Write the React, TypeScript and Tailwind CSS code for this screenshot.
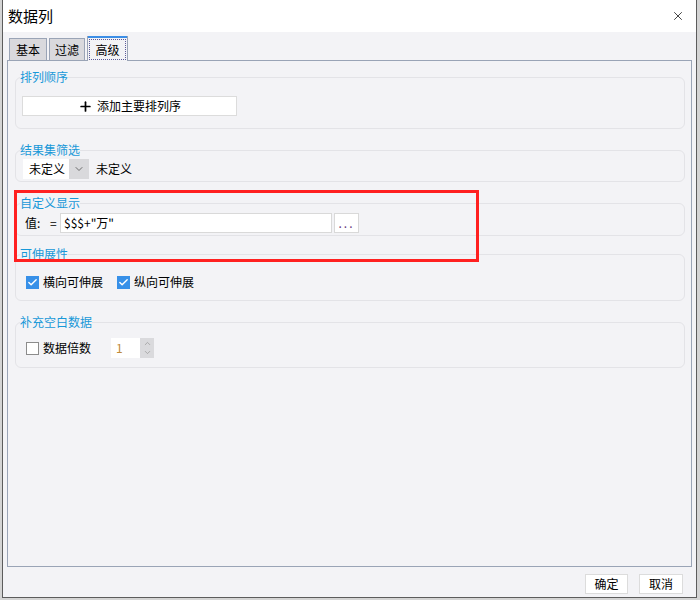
import { Check, Plus, X, ChevronDown, ChevronUp } from "lucide-react";

const font = { fontFamily: '"Noto Sans CJK SC", "Liberation Sans", sans-serif' };

function Group({ title, children, className = "" }: { title: string; children: React.ReactNode; className?: string }) {
  return (
    <fieldset className={`rounded-[6px] border border-[#e3e3e7] pl-[4px] ${className}`}>
      <legend className="px-0 text-[12px] leading-4 text-[#1898d8]">{title}</legend>
      {children}
    </fieldset>
  );
}

function CheckBox({ checked, label }: { checked: boolean; label: string }) {
  return (
    <label className="flex items-center gap-[4px]">
      {checked ? (
        <span className="flex h-[13px] w-[13px] items-center justify-center bg-[#3790e8]">
          <Check className="h-[11px] w-[11px] text-white" strokeWidth={3} />
        </span>
      ) : (
        <span className="h-[13px] w-[13px] border border-[#8c8c8c] bg-white" />
      )}
      <span>{label}</span>
    </label>
  );
}

export default function App() {
  return (
    <div className="h-[600px] w-[700px] overflow-hidden bg-[#d4d4d4] text-[12px] text-black" style={font}>
      <div className="ml-[2px] flex h-[598px] w-[695px] flex-col border-x border-b border-[#5c5c5c] bg-[#f3f3f6]">
        <div className="flex h-[32px] items-center justify-between bg-white pl-[5px] pr-[11px]">
          <span className="text-[15px]">数据列</span>
          <X className="h-[14px] w-[14px] text-black" strokeWidth={1.25} />
        </div>

        <div className="px-[4px] pt-[4px]">
          <div className="flex h-[24px] items-end gap-[2px] pl-[2px]">
            <div className="flex h-[22px] w-[38px] items-center justify-center border border-b-0 border-[#9aa4b6] bg-[#d9d9dd]">基本</div>
            <div className="flex h-[22px] w-[36px] items-center justify-center border border-b-0 border-[#9aa4b6] bg-[#d9d9dd]">过滤</div>
            <div className="relative z-10 -mb-px flex h-[25px] w-[41px] flex-col border-x border-[#9aa4b6] bg-[#f3f3f6]">
              <div className="h-[2px] bg-[#3c8ee6]" />
              <div className="m-[1px] flex flex-1 items-center justify-center border border-dotted border-[#5b5b9a]">高级</div>
            </div>
          </div>

          <div className="flex h-[507px] flex-col border border-[#9aa4b6] bg-[#f3f3f6] pl-[7px] pr-[6px] pt-[8px]">
            <Group title="排列顺序" className="pb-[12px]">
              <div className="ml-[2px] mt-[11px] flex h-[20px] w-[215px] items-center justify-center gap-[4px] border border-[#dcdcdc] bg-white">
                <Plus className="h-[15px] w-[15px]" strokeWidth={2.75} />
                <span>添加主要排列序</span>
              </div>
            </Group>

            <Group title="结果集筛选" className="mt-[13px] pb-[2px]">
              <div className="ml-[3px] mt-[1px] flex items-center gap-[7px]">
                <div className="flex h-[20px] w-[66px]">
                  <div className="flex flex-1 items-center bg-white pl-[6px]">未定义</div>
                  <div className="flex w-[20px] items-center justify-center bg-[#d9d9dc]">
                    <ChevronDown className="h-[12px] w-[12px] text-[#444]" strokeWidth={1.5} />
                  </div>
                </div>
                <span>未定义</span>
              </div>
            </Group>

            <div className="relative">
              <div className="pointer-events-none absolute left-[-1px] top-[8px] z-10 h-[72px] w-[465px] border-[3px] border-[#ff2020]" />
              <Group title="自定义显示" className="mt-[13px] pb-[2px]">
                <div className="ml-[5px] mt-[2px] flex items-center">
                  <span className="w-[25px]">值:</span>
                  <span className="w-[10px]">=</span>
                  <div className="flex h-[20px] w-[272px] items-center border border-[#d9d9d9] bg-white pl-[3px]">$$$+"万"</div>
                  <div className="ml-[2px] flex h-[20px] w-[25px] items-center justify-center border border-[#d9d9d9] bg-white tracking-[2px] text-[#6a3a80]">...</div>
                </div>
              </Group>
            </div>

            <Group title="可伸展性" className="mt-[10px] pb-[9px]">
              <div className="ml-[6px] mt-[11px] flex items-center gap-[14px]">
                <CheckBox checked label="横向可伸展" />
                <CheckBox checked label="纵向可伸展" />
              </div>
            </Group>

            <Group title="补充空白数据" className="mt-[13px] pb-[9px]">
              <div className="ml-[6px] mt-[8px] flex items-center">
                <CheckBox checked={false} label="数据倍数" />
                <div className="ml-[20px] flex h-[20px]">
                  <div className="flex w-[29px] items-center bg-white pl-[5px] text-[#c08a3a]">1</div>
                  <div className="flex w-[14px] flex-col items-center justify-center bg-[#dadadd] text-[#999]">
                    <ChevronUp className="h-[9px] w-[9px]" />
                    <ChevronDown className="h-[9px] w-[9px]" />
                  </div>
                </div>
              </div>
            </Group>
          </div>
        </div>

        <div className="mt-[7px] flex justify-end gap-[11px] pr-[13px]">
          <div className="flex h-[20px] w-[43px] items-center justify-center border border-[#dcdcdc] bg-white">确定</div>
          <div className="flex h-[20px] w-[44px] items-center justify-center border border-[#dcdcdc] bg-white">取消</div>
        </div>
      </div>
    </div>
  );
}
